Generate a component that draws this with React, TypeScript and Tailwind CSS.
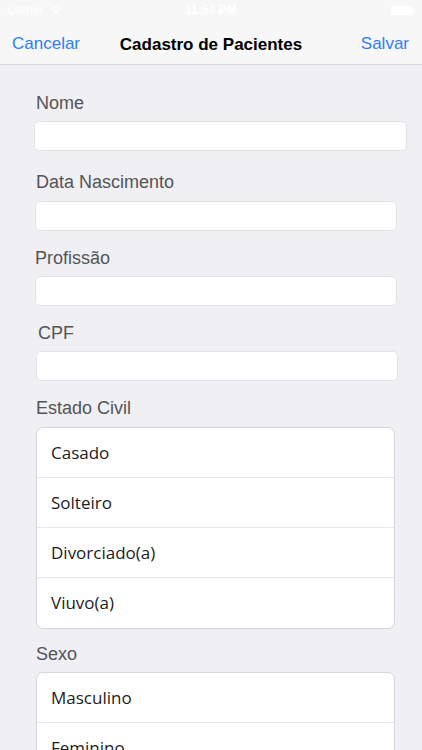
import React from 'react'

const font = { fontFamily: '"Liberation Sans", Arial, sans-serif' }

function Label({ text, className }: { text: string; className: string }) {
  return (
    <div className={`text-[18px] leading-[22px] text-[#545458] ${className}`}>{text}</div>
  )
}

function Input({ className }: { className: string }) {
  return <div className={`h-[30px] rounded-[5px] border border-[#e3e3e8] bg-white ${className}`} />
}

function OptionList({ items, className }: { items: string[]; className: string }) {
  return (
    <div className={`ml-[36px] w-[359px] overflow-hidden rounded-[7px] border border-[#d6d6da] bg-white ${className}`}>
      {items.map((item, i) => (
        <div
          key={item}
          className={`flex h-[50px] items-center pl-[14px] text-[17px] text-[#1c1c1e] ${
            i < items.length - 1 ? 'border-b border-[#e6e6ea]' : ''
          }`}
          style={{ fontFamily: '"Open Sans", "Noto Sans", sans-serif' }}
        >
          {item}
        </div>
      ))}
    </div>
  )
}

export default function App() {
  return (
    <div className="h-[750px] w-[422px] overflow-hidden bg-[#efeff4]" style={font}>
      {/* Status bar + nav */}
      <div className="bg-[#f7f7f7]">
        <div className="relative flex h-[20px] items-center px-[7px] text-[12px] text-white">
          <span>Carrier</span>
          <svg width="14" height="10" viewBox="0 0 14 10" className="ml-[5px]" fill="white">
            <path d="M7 9.5 L4.8 7.2 A3.2 3.2 0 0 1 9.2 7.2 Z" />
            <path d="M3.4 5.8 A5.2 5.2 0 0 1 10.6 5.8 L9.8 6.6 A4 4 0 0 0 4.2 6.6 Z" />
            <path d="M1.6 4 A7.8 7.8 0 0 1 12.4 4 L11.6 4.8 A6.6 6.6 0 0 0 2.4 4.8 Z" />
          </svg>
          <span className="absolute left-1/2 -translate-x-1/2 font-bold">11:54 PM</span>
          <div className="ml-auto flex items-center">
            <div className="h-[9px] w-[22px] rounded-[2px] bg-white" />
            <div className="ml-[1px] h-[4px] w-[1.5px] bg-white" />
          </div>
        </div>
        <div className="relative flex h-[45px] items-center border-b border-[#d8d8dc] px-[12px] pt-[3px] text-[17px]">
          <span className="text-[#2f7df6]">Cancelar</span>
          <span className="absolute left-1/2 -translate-x-1/2 pt-[3px] font-bold text-black">Cadastro de Pacientes</span>
          <span className="ml-auto mr-[1px] text-[#2f7df6]">Salvar</span>
        </div>
      </div>

      {/* Form */}
      <Label text="Nome" className="mt-[27px] ml-[36px]" />
      <Input className="mt-[7px] ml-[34px] w-[373px]" />

      <Label text="Data Nascimento" className="mt-[20px] ml-[36px]" />
      <Input className="mt-[8px] ml-[35px] w-[362px]" />

      <Label text="Profissão" className="mt-[16px] ml-[35px]" />
      <Input className="mt-[7px] ml-[35px] w-[362px]" />

      <Label text="CPF" className="mt-[16px] ml-[38px]" />
      <Input className="mt-[7px] ml-[36px] w-[362px]" />

      <Label text="Estado Civil" className="mt-[16px] ml-[36px]" />
      <OptionList items={['Casado', 'Solteiro', 'Divorciado(a)', 'Viuvo(a)']} className="mt-[8px]" />

      <Label text="Sexo" className="mt-[14px] ml-[36px]" />
      <OptionList items={['Masculino', 'Feminino']} className="mt-[7px]" />
    </div>
  )
}
